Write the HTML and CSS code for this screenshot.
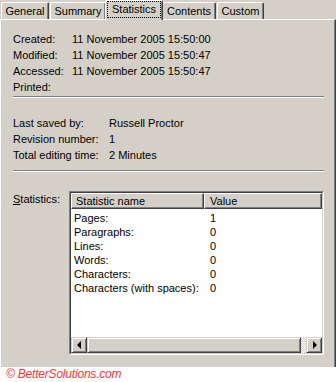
FILE: index.html
```html
<!DOCTYPE html>
<html lang="en">
<head>
    <meta charset="UTF-8">
    <title>Properties - Statistics</title>
    <link rel="stylesheet" href="styles.css">
</head>
<body>
    <div class="window">
        <div class="tabs">
            <div class="tab tab-general">General</div>
            <div class="tab tab-summary">Summary</div>
            <div class="tab tab-active"><span>Statistics</span></div>
            <div class="tab tab-contents">Contents</div>
            <div class="tab tab-custom">Custom</div>
        </div>
        <div class="panel">
            <div class="info info-dates">
                <span>Created:</span><span>11 November 2005 15:50:00</span>
                <span>Modified:</span><span>11 November 2005 15:50:47</span>
                <span>Accessed:</span><span>11 November 2005 15:50:47</span>
                <span>Printed:</span><span></span>
            </div>
            <div class="sep"></div>
            <div class="info info-saved">
                <span>Last saved by:</span><span>Russell Proctor</span>
                <span>Revision number:</span><span>1</span>
                <span>Total editing time:</span><span>2 Minutes</span>
            </div>
            <div class="sep sep-2"></div>
            <div class="stats">
                <div class="stats-label"><u>S</u>tatistics:</div>
                <div class="listbox">
                    <div class="listbox-in">
                        <div class="lv-head">
                            <div class="lv-col lv-name">Statistic name</div>
                            <div class="lv-col lv-value">Value</div>
                        </div>
                        <div class="lv-body">
                            <div class="lv-row"><span class="c1">Pages:</span><span class="c2">1</span></div>
                            <div class="lv-row"><span class="c1">Paragraphs:</span><span class="c2">0</span></div>
                            <div class="lv-row"><span class="c1">Lines:</span><span class="c2">0</span></div>
                            <div class="lv-row"><span class="c1">Words:</span><span class="c2">0</span></div>
                            <div class="lv-row"><span class="c1">Characters:</span><span class="c2">0</span></div>
                            <div class="lv-row"><span class="c1">Characters (with spaces):</span><span class="c2">0</span></div>
                        </div>
                        <div class="hscroll">
                            <div class="sb-btn"><i class="arr-left"></i></div>
                            <div class="sb-track"><div class="sb-thumb"></div></div>
                            <div class="sb-btn"><i class="arr-right"></i></div>
                        </div>
                    </div>
                </div>
            </div>
        </div>
    </div>
    <div class="footer">&copy; BetterSolutions.com</div>
</body>
</html>
```

FILE: styles.css
```css
*{
    margin: 0;
    padding: 0;
    box-sizing: border-box;
}
body{
    background-color: #fff;
    font-family: "Liberation Sans", Arial, sans-serif;
    font-size: 11px;
    color: #000;
}
.window{
    width: 336px;
    background-color: #d4d0c8;
}

/* tabs */
.tabs{
    display: flex;
    align-items: flex-end;
    height: 19px;
    padding-left: 1px;
}
.tab{
    height: 17px;
    line-height: 16px;
    text-align: center;
    border-top: 1px solid #fff;
    border-left: 1px solid #fff;
    border-right: 1px solid #404040;
    box-shadow: inset -1px 0 #808080;
    border-radius: 2px 2px 0 0;
    margin-right: 1px;
    background-color: #d4d0c8;
}
.tab-general{ width: 48px; }
.tab-summary{ width: 56px; }
.tab-contents{ width: 54px; }
.tab-custom{ width: 47px; }
.tab-active{
    position: relative;
    z-index: 1;
    width: 58px;
    height: 20px;
    margin: 0 -1px -1px -2px;
    padding: 0 1px;
}
.tab-active span{
    display: block;
    height: 17px;
    line-height: 15px;
    border: 1px dotted #000;
}

/* panel */
.panel{
    height: 348px;
    border-top: 1px solid #fff;
    border-left: 1px solid #fff;
    border-right: 1px solid #404040;
    box-shadow: inset -1px 0 #808080;
    padding: 11px 11px 0 12px;
}
.info{
    display: grid;
    line-height: 16px;
    white-space: nowrap;
}
.info-dates{
    grid-template-columns: 59px auto;
}
.info-saved{
    grid-template-columns: 96px auto;
    margin-top: 17px;
}
.sep{
    height: 2px;
    border-top: 1px solid #808080;
    border-bottom: 1px solid #fff;
    margin-top: 1px;
}
.sep-2{
    margin-top: 7px;
}

/* statistics list */
.stats{
    display: flex;
    margin-top: 19px;
}
.stats-label{
    width: 56px;
    line-height: 16px;
}
.listbox{
    flex: 1;
    border: 1px solid;
    border-color: #808080 #fff #fff #808080;
}
.listbox-in{
    border: 1px solid;
    border-color: #404040 #d4d0c8 #d4d0c8 #404040;
    background-color: #fff;
}
.lv-head{
    display: flex;
    height: 16px;
}
.lv-col{
    line-height: 14px;
    background-color: #d4d0c8;
    border-top: 1px solid #fff;
    border-left: 1px solid #fff;
    border-right: 1px solid #404040;
    border-bottom: 1px solid #404040;
    box-shadow: inset -1px -1px #808080;
}
.lv-name{
    width: 133px;
    padding-left: 4px;
}
.lv-value{
    flex: 1;
    padding-left: 5px;
}
.lv-body{
    height: 128px;
    padding-top: 2px;
}
.lv-row{
    display: flex;
    line-height: 14px;
    white-space: nowrap;
}
.lv-row .c1{
    width: 133px;
    padding-left: 3px;
}
.lv-row .c2{
    padding-left: 6px;
}

/* scrollbar */
.hscroll{
    display: flex;
    height: 16px;
}
.sb-btn,
.sb-thumb{
    border: 1px solid;
    border-color: #d4d0c8 #404040 #404040 #d4d0c8;
    box-shadow: inset 1px 1px #fff, inset -1px -1px #808080;
    background-color: #d4d0c8;
}
.sb-btn{
    width: 16px;
    height: 16px;
    display: flex;
    align-items: center;
    justify-content: center;
}
.sb-track{
    flex: 1;
    display: flex;
    background-image: repeating-conic-gradient(#fff 0 25%, #d4d0c8 0 50%);
    background-size: 2px 2px;
}
.sb-thumb{
    width: 214px;
    height: 16px;
}
.arr-left,
.arr-right{
    display: block;
    width: 0;
    height: 0;
    border-top: 4px solid transparent;
    border-bottom: 4px solid transparent;
}
.arr-left{
    border-right: 4px solid #000;
    margin-left: -1px;
}
.arr-right{
    border-left: 4px solid #000;
    margin-left: 1px;
}

.footer{
    height: 15px;
    line-height: 15px;
    padding-left: 6px;
    font-size: 12px;
    font-style: italic;
    letter-spacing: -0.2px;
    color: #f33;
}
```
